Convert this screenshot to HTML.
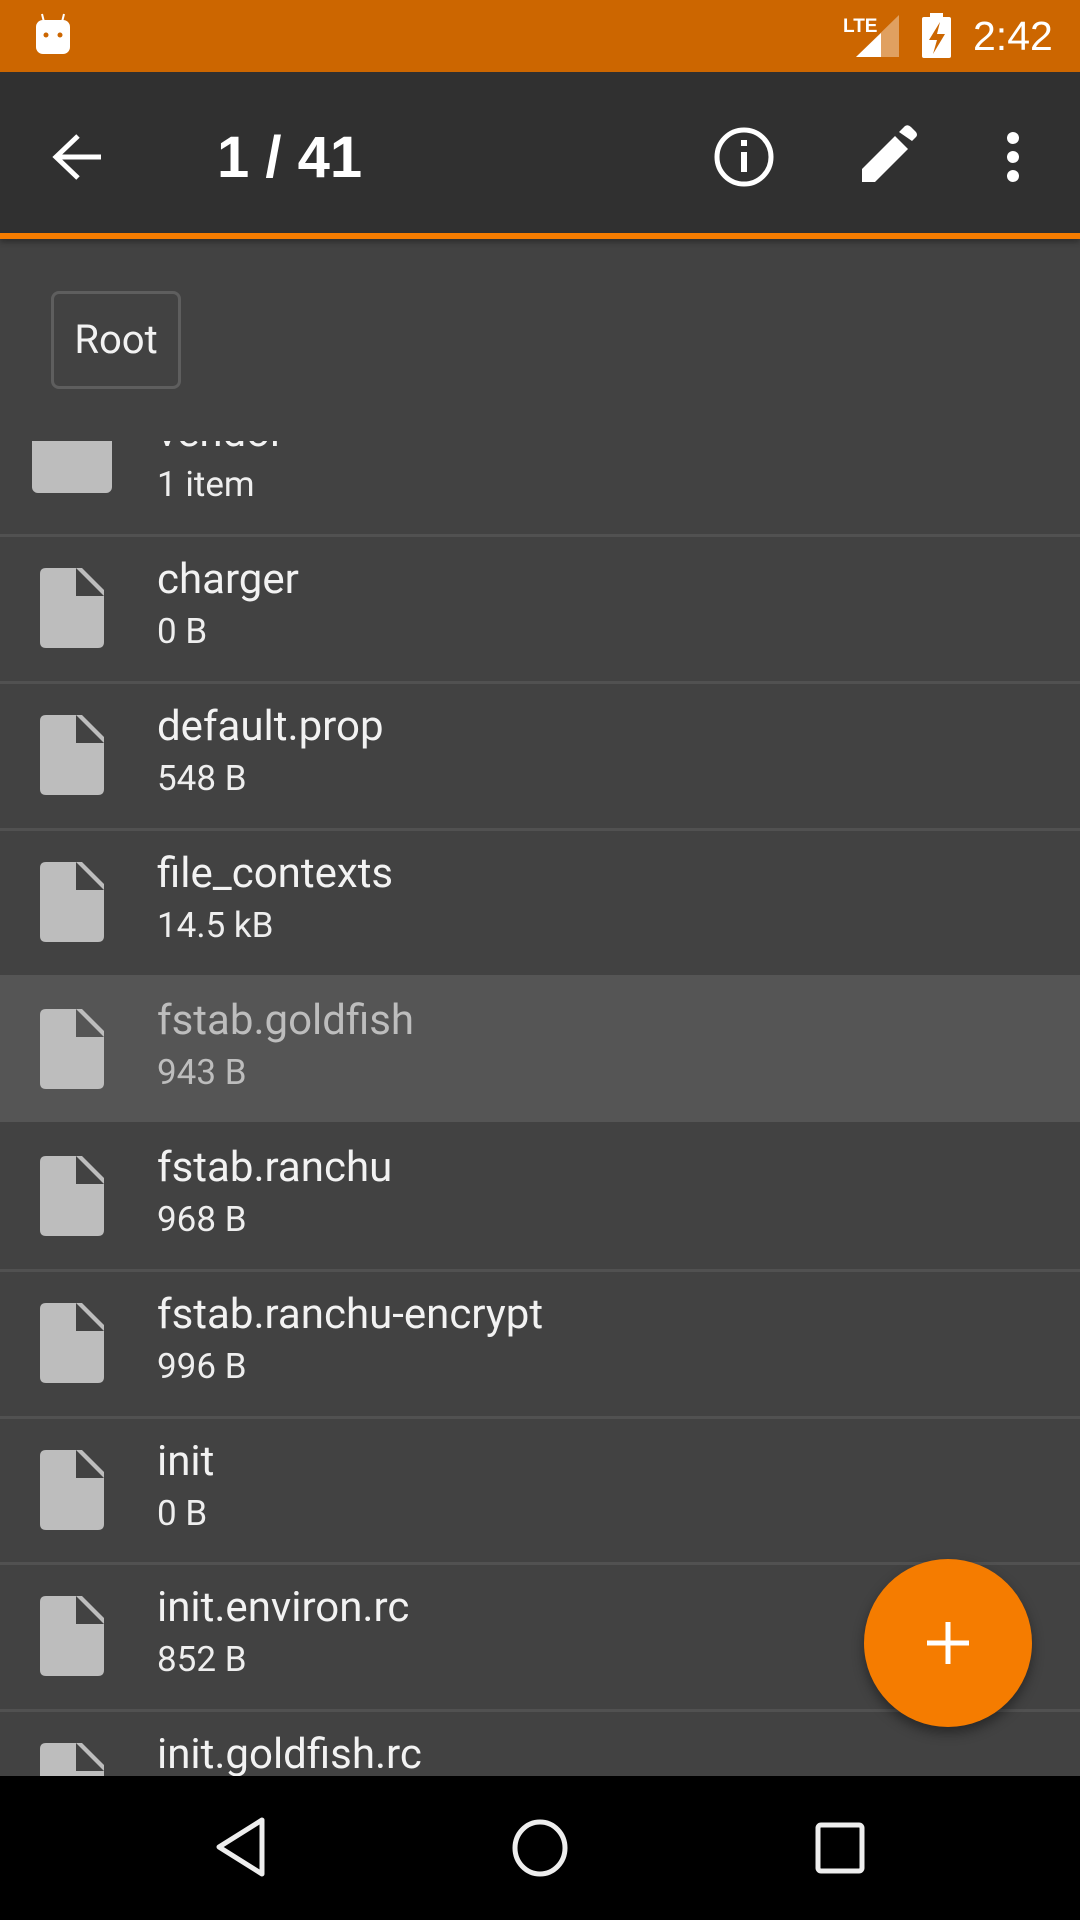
<!DOCTYPE html>
<html><head><meta charset="utf-8"><style>
*{margin:0;padding:0;box-sizing:border-box}
body{width:1080px;height:1920px;overflow:hidden;background:#424242;font-family:"Roboto","Liberation Sans",sans-serif;position:relative}
.abs{position:absolute}
.sb{left:0;top:0;width:1080px;height:72px;background:#cc6600}
.tb{left:0;top:72px;width:1080px;height:161px;background:#303030}
.ol{left:0;top:233px;width:1080px;height:6px;background:#f57c00;box-shadow:0 3px 6px rgba(0,0,0,.35)}
.row{position:absolute;left:0;width:1080px;height:147px}
.sep{position:absolute;left:0;width:1080px;height:3px;background:#515151}
.n{position:absolute;left:157px;font-size:42px;color:#f2f2f2;white-space:nowrap}
.s{position:absolute;left:157px;font-size:35px;color:#eeeeee;white-space:nowrap}
.nav{left:0;top:1776px;width:1080px;height:144px;background:#000}
</style></head><body>
<div class="abs sb"></div>
<svg class="abs" style="left:0;top:0" width="1080" height="72">
<rect x="36" y="20" width="34" height="34" rx="7" fill="#fff"/>
<path d="M42 14 L44 22 M64 14 L62 22" stroke="#fff" stroke-width="2"/>
<circle cx="46" cy="35" r="2.5" fill="#cc6600"/><circle cx="60" cy="35" r="2.5" fill="#cc6600"/>
<text x="843" y="32" font-family="Liberation Sans" font-size="19" font-weight="bold" fill="#fff">LTE</text>
<polygon points="856,57 899,57 899,15" fill="#e0a060"/>
<polygon points="856,57 881,57 881,33" fill="#fff"/>
<rect x="922" y="17" width="29" height="41" rx="2" fill="#fff"/><rect x="930" y="13" width="13" height="5" fill="#fff"/>
<path d="M940 22 L929 40 L937 40 L933 54 L945 34 L937 34 Z" fill="#cc6600"/>
<text x="973" y="50" font-family="Liberation Sans" font-size="41" fill="#fff">2:42</text>
</svg>
<div class="abs tb"></div>
<svg class="abs" style="left:0;top:72px" width="1080" height="161">
<path d="M101 85 H58 M78 64 L56 85 L78 106" stroke="#fff" stroke-width="5" fill="none"/>
<text x="217" y="105" font-family="Liberation Sans" font-size="58" font-weight="bold" fill="#fff">1 / 41</text>
<circle cx="744" cy="85" r="27" stroke="#fff" stroke-width="5" fill="none"/>
<rect x="741" y="80" width="6" height="20" fill="#fff"/><rect x="741" y="68" width="6" height="6" fill="#fff"/>
<path d="M862 110 L862 97 L895 64 L908 77 L875 110 Z M899 60 L905 54 Q908 52 911 55 L916 60 Q918 63 916 65 L912 69 Z" fill="#fff"/>
<circle cx="1013" cy="66" r="6" fill="#fff"/><circle cx="1013" cy="85" r="6" fill="#fff"/><circle cx="1013" cy="104" r="6" fill="#fff"/>
</svg>
<div class="abs ol"></div>
<div class="abs" style="left:51px;top:291px;width:130px;height:98px;border:3px solid #5e5e5e;border-radius:8px;color:#f2f2f2;font-size:40px;line-height:92px;text-align:center">Root</div>

<svg width="0" height="0" style="position:absolute"><defs><symbol id="f" viewBox="0 0 64 80"><path d="M6 0 H42 L64 22 V74 Q64 80 58 80 H6 Q0 80 0 74 V6 Q0 0 6 0 Z" fill="#bdbdbd"/><path d="M36 0 V28 H64" fill="#424242"/></symbol><symbol id="fh" viewBox="0 0 64 80"><path d="M6 0 H42 L64 22 V74 Q64 80 58 80 H6 Q0 80 0 74 V6 Q0 0 6 0 Z" fill="#bdbdbd"/><path d="M36 0 V28 H64" fill="#555"/></symbol></defs></svg>

<div class="abs" style="left:0;top:441px;width:1080px;height:1335px;overflow:hidden">
 <div class="row" style="top:-54px">
  <div class="abs" style="left:32px;top:54px;width:80px;height:52px;background:#bdbdbd;border-radius:0 0 6px 6px"></div>
  <div class="n" style="top:21px">vendor</div>
  <div class="s" style="top:77px">1 item</div>
 </div>
 <div class="sep" style="top:93px"></div>
 <div class="row" style="top:96px"><svg class="abs" style="left:40px;top:31px" width="64" height="80"><use href="#f"/></svg><div class="n" style="top:18px">charger</div><div class="s" style="top:74px">0 B</div></div>
 <div class="sep" style="top:240px"></div>
 <div class="row" style="top:243px"><svg class="abs" style="left:40px;top:31px" width="64" height="80"><use href="#f"/></svg><div class="n" style="top:18px">default.prop</div><div class="s" style="top:74px">548 B</div></div>
 <div class="sep" style="top:387px"></div>
 <div class="row" style="top:390px"><svg class="abs" style="left:40px;top:31px" width="64" height="80"><use href="#f"/></svg><div class="n" style="top:18px">file_contexts</div><div class="s" style="top:74px">14.5 kB</div></div>
 <div class="row" style="top:534px;background:#555555"><svg class="abs" style="left:40px;top:34px" width="64" height="80"><use href="#fh"/></svg><div class="n" style="top:21px;color:#bdbdbd">fstab.goldfish</div><div class="s" style="top:77px;color:#bdbdbd">943 B</div></div>
 <div class="row" style="top:681px"><svg class="abs" style="left:40px;top:34px" width="64" height="80"><use href="#f"/></svg><div class="n" style="top:21px">fstab.ranchu</div><div class="s" style="top:77px">968 B</div></div>
 <div class="sep" style="top:828px"></div>
 <div class="row" style="top:831px"><svg class="abs" style="left:40px;top:31px" width="64" height="80"><use href="#f"/></svg><div class="n" style="top:18px">fstab.ranchu-encrypt</div><div class="s" style="top:74px">996 B</div></div>
 <div class="sep" style="top:975px"></div>
 <div class="row" style="top:978px"><svg class="abs" style="left:40px;top:31px" width="64" height="80"><use href="#f"/></svg><div class="n" style="top:18px">init</div><div class="s" style="top:74px">0 B</div></div>
 <div class="sep" style="top:1121px"></div>
 <div class="row" style="top:1124px"><svg class="abs" style="left:40px;top:31px" width="64" height="80"><use href="#f"/></svg><div class="n" style="top:18px">init.environ.rc</div><div class="s" style="top:74px">852 B</div></div>
 <div class="sep" style="top:1268px"></div>
 <div class="row" style="top:1271px"><svg class="abs" style="left:40px;top:31px" width="64" height="80"><use href="#f"/></svg><div class="n" style="top:18px">init.goldfish.rc</div></div>
</div>

<div class="abs" style="left:864px;top:1559px;width:168px;height:168px;border-radius:50%;background:#f57c00;box-shadow:0 6px 12px rgba(0,0,0,.4)"></div>
<svg class="abs" style="left:864px;top:1559px" width="168" height="168"><path d="M84 63 V105 M63 84 H105" stroke="#fff" stroke-width="5"/></svg>

<div class="abs nav"></div>
<svg class="abs" style="left:0;top:1776px" width="1080" height="144">
<path d="M262 44 L262 98 L219 71 Z" stroke="#eee" stroke-width="5" fill="none" stroke-linejoin="round"/>
<ellipse cx="540" cy="72" rx="25" ry="26" stroke="#eee" stroke-width="5" fill="none"/>
<rect x="818" y="49" width="44" height="46" rx="3" stroke="#eee" stroke-width="5" fill="none"/>
</svg>
</body></html>
